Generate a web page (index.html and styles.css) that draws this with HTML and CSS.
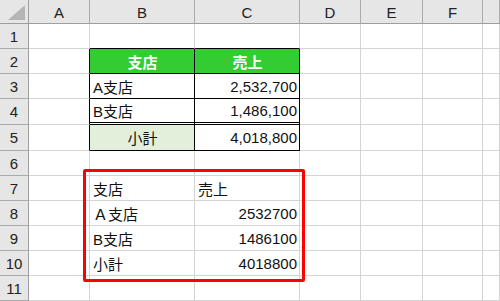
FILE: index.html
```html
<!DOCTYPE html>
<html>

<head>
  <meta charset="utf-8">
  <title>支店別売上</title>
  <link rel="stylesheet" href="styles.css">
</head>

<body>
  <div class="sheet">
    <!-- column headers -->
    <div class="corner">
      <svg width="28" height="23" viewBox="0 0 28 23"><polygon points="25,5 25,20 8,20" fill="#b5b5b5" /></svg>
    </div>
    <div class="ch">A</div>
    <div class="ch">B</div>
    <div class="ch">C</div>
    <div class="ch">D</div>
    <div class="ch">E</div>
    <div class="ch">F</div>
    <div class="ch"></div>

    <!-- row 1 -->
    <div class="rh">1</div>
    <div class="c"></div>
    <div class="c bb"></div>
    <div class="c bb"></div>
    <div class="c"></div>
    <div class="c"></div>
    <div class="c"></div>
    <div class="c"></div>

    <!-- row 2 -->
    <div class="rh">2</div>
    <div class="c br"></div>
    <div class="c br bb head">支店</div>
    <div class="c br bb head">売上</div>
    <div class="c"></div>
    <div class="c"></div>
    <div class="c"></div>
    <div class="c"></div>

    <!-- row 3 -->
    <div class="rh">3</div>
    <div class="c br"></div>
    <div class="c br bb">A支店</div>
    <div class="c br bb num">2,532,700</div>
    <div class="c"></div>
    <div class="c"></div>
    <div class="c"></div>
    <div class="c"></div>

    <!-- row 4 -->
    <div class="rh">4</div>
    <div class="c br"></div>
    <div class="c br dbl">B支店</div>
    <div class="c br dbl num">1,486,100</div>
    <div class="c"></div>
    <div class="c"></div>
    <div class="c"></div>
    <div class="c"></div>

    <!-- row 5 -->
    <div class="rh">5</div>
    <div class="c br"></div>
    <div class="c br bb total">小計</div>
    <div class="c br bb num">4,018,800</div>
    <div class="c"></div>
    <div class="c"></div>
    <div class="c"></div>
    <div class="c"></div>

    <!-- row 6 -->
    <div class="rh">6</div>
    <div class="c"></div>
    <div class="c"></div>
    <div class="c"></div>
    <div class="c"></div>
    <div class="c"></div>
    <div class="c"></div>
    <div class="c"></div>

    <!-- row 7 -->
    <div class="rh">7</div>
    <div class="c"></div>
    <div class="c plain">支店</div>
    <div class="c plain">売上</div>
    <div class="c"></div>
    <div class="c"></div>
    <div class="c"></div>
    <div class="c"></div>

    <!-- row 8 -->
    <div class="rh">8</div>
    <div class="c"></div>
    <div class="c plain">Ａ支店</div>
    <div class="c plain num">2532700</div>
    <div class="c"></div>
    <div class="c"></div>
    <div class="c"></div>
    <div class="c"></div>

    <!-- row 9 -->
    <div class="rh">9</div>
    <div class="c"></div>
    <div class="c plain">B支店</div>
    <div class="c plain num">1486100</div>
    <div class="c"></div>
    <div class="c"></div>
    <div class="c"></div>
    <div class="c"></div>

    <!-- row 10 -->
    <div class="rh">10</div>
    <div class="c"></div>
    <div class="c plain">小計</div>
    <div class="c plain num">4018800</div>
    <div class="c"></div>
    <div class="c"></div>
    <div class="c"></div>
    <div class="c"></div>

    <!-- row 11 -->
    <div class="rh">11</div>
    <div class="c"></div>
    <div class="c"></div>
    <div class="c"></div>
    <div class="c"></div>
    <div class="c"></div>
    <div class="c"></div>
    <div class="c"></div>

    <div class="mark"></div>
  </div>
</body>

</html>
```

FILE: styles.css
```css
body {
  margin: 0;
  background: #fff;
  font-family: "Liberation Sans", "Noto Sans CJK JP", sans-serif;
  font-size: 15px;
  color: #111;
}

.sheet {
  position: relative;
  display: grid;
  grid-template-columns: 29px 61px 105px 105px 61px 62px 60px 17px;
  grid-template-rows: 24px 25px 25px 25px 26px 26px 25px 25px 25px 25px 25px 25px;
  width: 500px;
  height: 301px;
  overflow: hidden;
}

.sheet > div {
  box-sizing: border-box;
}

.corner {
  background: #e6e6e6;
  border-right: 1px solid #9e9e9e;
  border-bottom: 1px solid #9e9e9e;
}

.corner svg {
  display: block;
}

.ch {
  background: #e6e6e6;
  border-right: 1px solid #ababab;
  border-bottom: 1px solid #9e9e9e;
  display: flex;
  align-items: center;
  justify-content: center;
  color: #222;
  padding-top: 1px;
}

.rh {
  background: #e6e6e6;
  border-right: 1px solid #9e9e9e;
  border-bottom: 1px solid #ababab;
  display: flex;
  align-items: center;
  justify-content: center;
  color: #222;
}

.c {
  border-right: 1px solid #d4d4d4;
  border-bottom: 1px solid #d4d4d4;
  display: flex;
  align-items: center;
  padding: 0 2px 0 3px;
  white-space: nowrap;
}

/* black rules around the summary table */
.br {
  border-right-color: #000;
}

.bb {
  border-bottom-color: #000;
}

.dbl {
  border-bottom: 3px double #000;
}

.head {
  background: #33cc33;
  color: #fff;
  font-weight: bold;
  justify-content: center;
}

.total {
  background: #e2efda;
  justify-content: center;
}

.num {
  justify-content: flex-end;
}

.mark {
  position: absolute;
  left: 83px;
  top: 169px;
  width: 222px;
  height: 113px;
  border: 3px solid #ff0000;
  border-radius: 2px;
}
```
